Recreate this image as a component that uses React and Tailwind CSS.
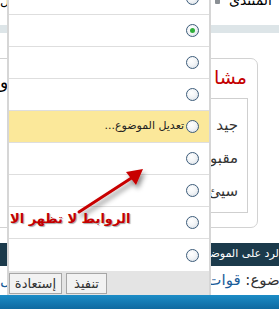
const Radio = ({ checked }) => (
  <span className="relative flex h-[13px] w-[13px] shrink-0 items-center justify-center rounded-full border border-[#3d5c7a] bg-[radial-gradient(circle_at_40%_35%,#ffffff_0%,#f3f5f7_45%,#d3dbe3_100%)]">
    {checked && <span className="h-[5px] w-[5px] rounded-full bg-[#2fae3a]" />}
  </span>
);

const rows = [
  { checked: false },
  { checked: true },
  { checked: false },
  { checked: false },
  { label: "تعديل الموضوع...", highlight: true },
  {},
  {},
  {},
  { last: true },
];

export default function App() {
  return (
    <div className="relative h-[309px] w-[279px] overflow-hidden bg-white font-['DejaVu_Sans',sans-serif] text-[#222]">
      {/* page behind the menu */}
      <div className="relative flex h-[25px] items-start justify-between">
        <span className="-mt-[9px] text-[13px] text-black">ل</span>
        <div className="-mt-[10px] flex items-start gap-[9px] pr-[7px]">
          <span className="mt-[9px] h-[5px] w-[5px] rounded-[1px] bg-[#8a8f94]" />
          <span dir="rtl" className="text-[14px] text-black">المنتدى</span>
        </div>
      </div>
      <div className="h-[8px] bg-[#dde5e8]" />
      <div className="h-[25px]" />
      <div className="-ml-[1px] h-[170px] w-[259px] rounded-r-[7px] border border-[#d2d2d2] bg-white">
        <div className="flex h-[16px] items-start justify-between">
          <span className="mt-[15px] text-[17px] leading-none text-black">و</span>
          <span dir="rtl" className="mt-[9px] pr-[10px] text-[19px] leading-none text-[#c40000]">مشا</span>
        </div>
        <div className="ml-[20px] mt-[23px] h-[115px] w-[228px] border border-[#cfcfcf]">
          <div dir="rtl" className="flex flex-col gap-[12px] pr-[9px] pt-[16px] text-[15px] leading-[21px] text-[#333]">
            <span>جيد</span>
            <span>مقبول</span>
            <span>سيئ</span>
          </div>
        </div>
      </div>
      <div className="h-[15px]" />
      <div className="flex h-[23px] items-center justify-end overflow-hidden bg-[#1b3a4b]">
        <span dir="rtl" className="-mr-[3px] whitespace-nowrap text-[11px] text-white">الرد على الموضوع</span>
      </div>
      <div className="flex h-[29px] items-center justify-between overflow-hidden">
        <span className="text-[15px] text-[#1a5c99]">ال</span>
        <span dir="rtl" className="-mr-[26px] whitespace-nowrap text-[15px] text-[#333]">
          الموضوع: <span className="text-[#1a5c99]">قوات</span>
        </span>
      </div>
      <div className="h-[14px] bg-[linear-gradient(180deg,#1c8cc6_0%,#1377b0_60%,#0f6aa0_100%)]" />

      {/* dropdown menu overlay */}
      <div className="absolute left-[7px] top-0 flex h-[295px] w-[204px] flex-col overflow-hidden border-x-2 border-x-[#d6d6d6] bg-white">
        <div className="-mt-[17px] flex flex-col">
          {rows.map((r, i) => (
            <div
              key={i}
              className={`flex h-[32px] shrink-0 items-center justify-end gap-[2px] pr-[10px] ${
                r.last ? "" : "border-b border-[#dedede]"
              } ${r.highlight ? "bg-[#fbe89a]" : ""}`}
            >
              {r.label && (
                <span dir="rtl" className="text-[11px] text-[#222]">
                  {r.label}
                </span>
              )}
              <Radio checked={r.checked} />
            </div>
          ))}
        </div>
        <div className="flex h-[24px] items-center gap-[4px] bg-[#e4e4e4]">
          <button className="h-[21px] w-[53px] border border-[#a6a6a6] bg-[#f2f2f2] text-[13px] leading-none text-[#333]">
            إستعادة
          </button>
          <button className="h-[21px] w-[41px] border border-[#a6a6a6] bg-[#f2f2f2] text-[13px] leading-none text-[#333]">
            تنفيذ
          </button>
        </div>
      </div>

      {/* annotation */}
      <svg className="absolute left-0 top-0" width="279" height="309" viewBox="0 0 279 309">
        <defs>
          <filter id="sh" x="-30%" y="-30%" width="160%" height="160%">
            <feDropShadow dx="2" dy="4" stdDeviation="2.5" floodColor="#000" floodOpacity="0.45" />
          </filter>
        </defs>
        <g filter="url(#sh)">
          <line x1="79" y1="212" x2="133" y2="177" stroke="#c80000" strokeWidth="3" strokeLinecap="round" />
          <polygon points="143,169 126,172 136,185" fill="#c80000" />
        </g>
      </svg>
      <span
        dir="rtl"
        className="absolute left-[10px] top-[209px] whitespace-nowrap text-[13px] font-bold text-[#c40000] [text-shadow:1px_1px_1px_rgba(0,0,0,0.35)]"
      >
        الروابط لا تظهر الا
      </span>
    </div>
  );
}
